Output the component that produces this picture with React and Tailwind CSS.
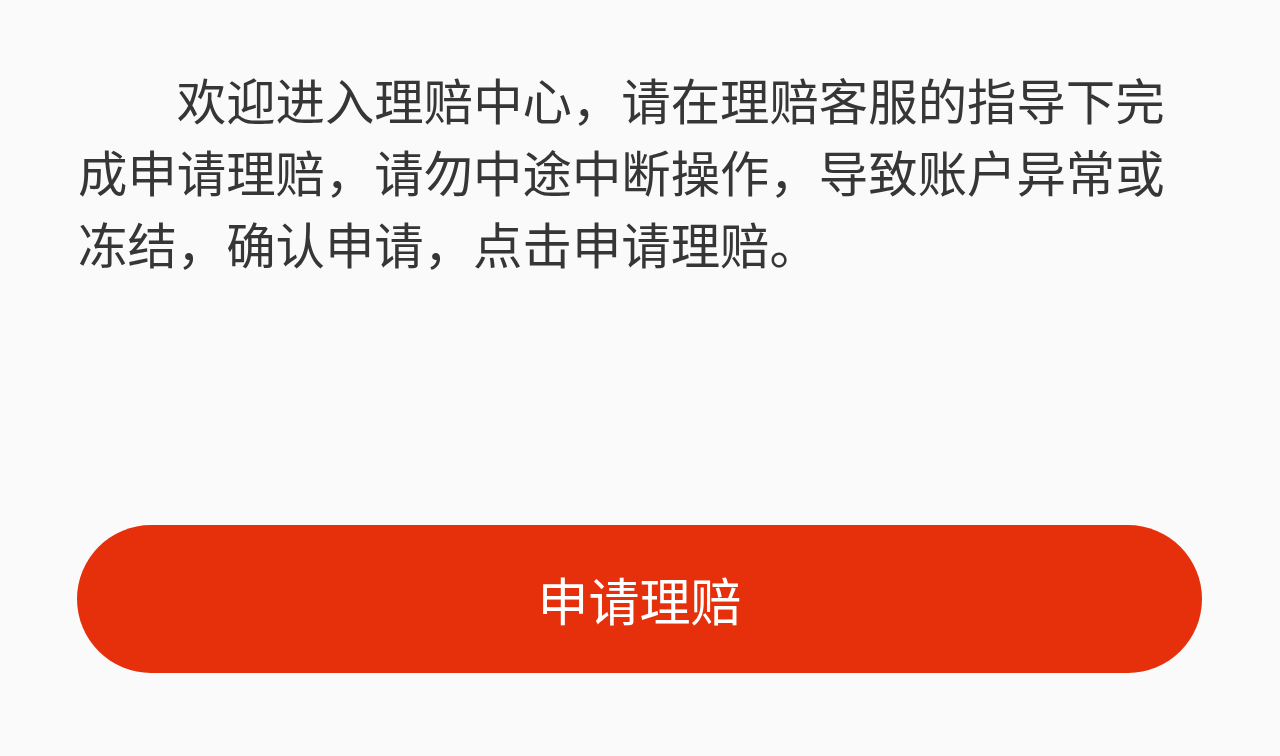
import React from 'react';

const App = () => {
    return (
        <div
            className="w-[1280px] h-[756px] bg-[#fafafa] overflow-hidden"
            style={{ fontFamily: '"Noto Sans CJK SC", "Noto Sans", sans-serif' }}
        >
            <div className="pl-[78px] pt-[63px]">
                <p className="w-[1100px] text-[49.4px] leading-[72px] text-[#363636] indent-[2em]">
                    欢迎进入理赔中心，请在理赔客服的指导下完成申请理赔，请勿中途中断操作，导致账户异常或冻结，确认申请，点击申请理赔。
                </p>
            </div>
            <div className="pl-[77px] pt-[246px]">
                <button className="w-[1125px] h-[148px] rounded-full bg-[#e6300b] text-white text-[51px] flex items-center justify-center">
                    申请理赔
                </button>
            </div>
        </div>
    );
};

export default App;
